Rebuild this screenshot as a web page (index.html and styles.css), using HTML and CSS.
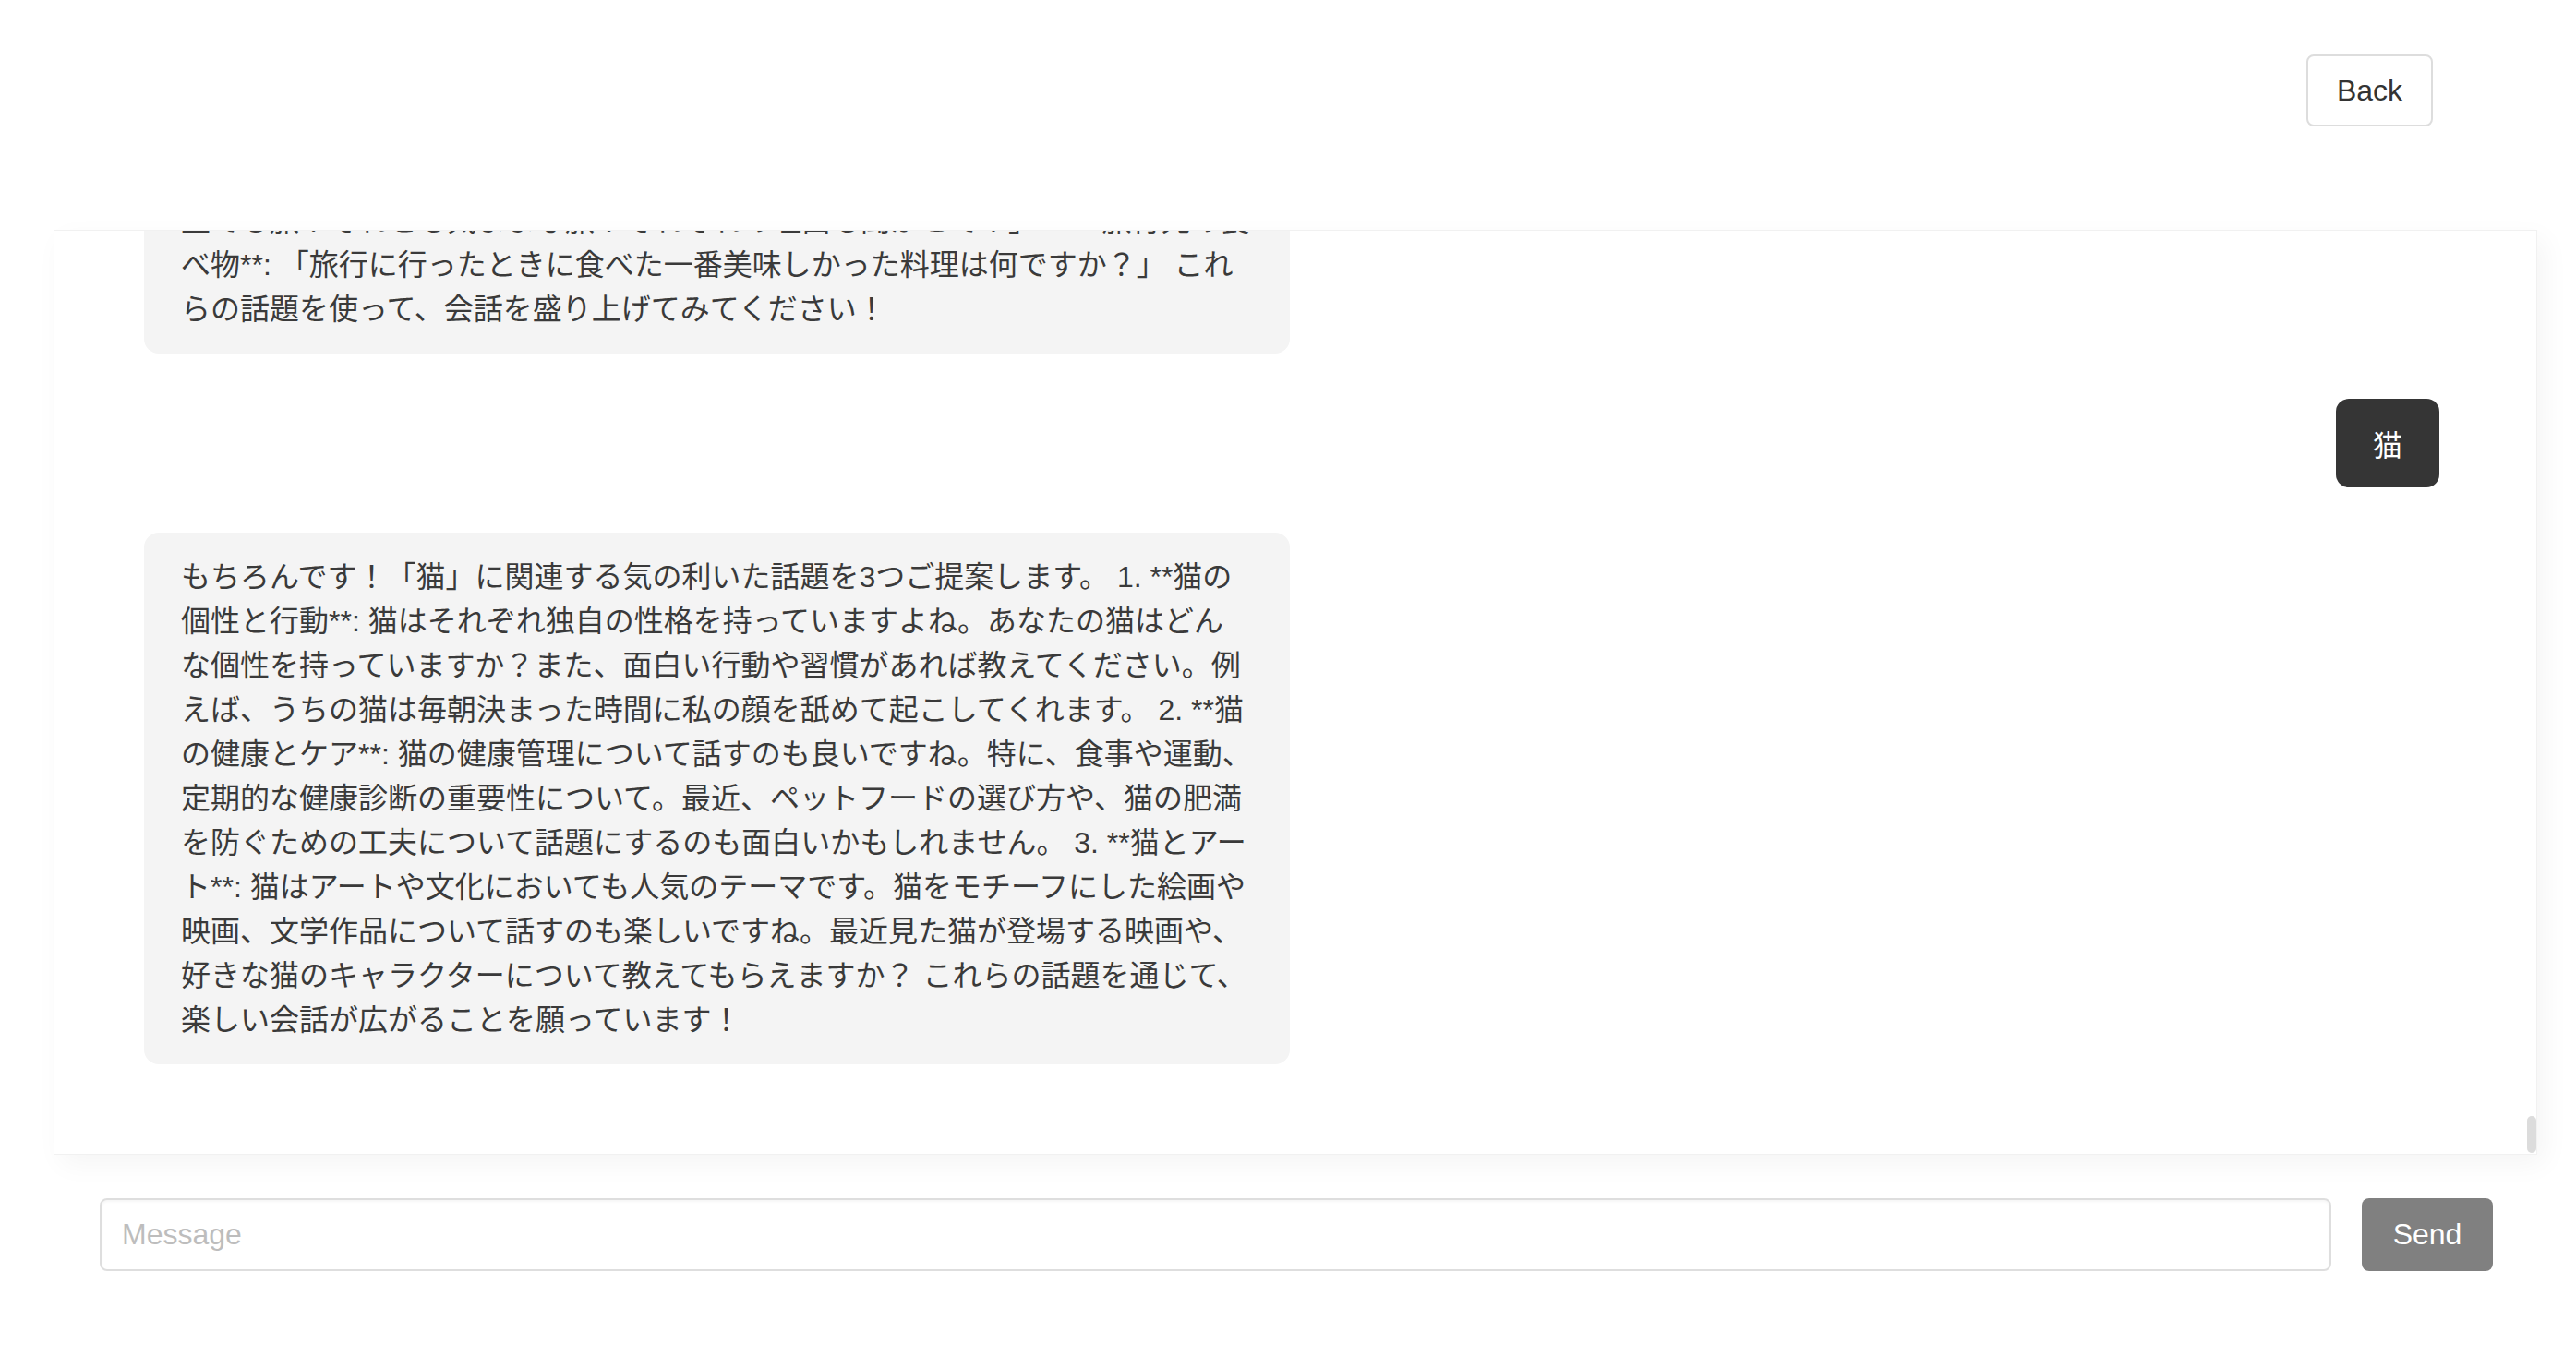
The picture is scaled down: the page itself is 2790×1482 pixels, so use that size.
FILE: index.html
```html
<!DOCTYPE html>
<html lang="ja">
<head>
<meta charset="utf-8">
<title>Chat</title>
<link rel="stylesheet" href="styles.css">
</head>
<body>
<div class="page">
  <header class="topbar">
    <button class="btn-back" type="button">Back</button>
  </header>
  <main class="chat">
    <div class="messages">
      <div class="msg msg-user"><div class="bubble bubble-user">旅行</div></div>
      <div class="msg msg-bot"><div class="bubble bubble-bot">もちろんです！「旅行」に関連する会話が弾む話題をいくつかご提案します。 1. **お気に入りの旅行先**: 「今までに行った中で一番好きな旅行先はどこですか？その理由も教えてください。」 2. **行ってみたい場所**: 「もし時間とお金に制限がなかったら、どこに旅行してみたいですか？」 3. **旅のスタイル**: 「計画を立てる旅？それとも気ままな旅？それぞれの理由も聞かせて！」 4. **旅行先の食べ物**: 「旅行に行ったときに食べた一番美味しかった料理は何ですか？」 これらの話題を使って、会話を盛り上げてみてください！</div></div>
      <div class="msg msg-user"><div class="bubble bubble-user">猫</div></div>
      <div class="msg msg-bot"><div class="bubble bubble-bot">もちろんです！「猫」に関連する気の利いた話題を3つご提案します。 1. **猫の個性と行動**: 猫はそれぞれ独自の性格を持っていますよね。あなたの猫はどんな個性を持っていますか？また、面白い行動や習慣があれば教えてください。例えば、うちの猫は毎朝決まった時間に私の顔を舐めて起こしてくれます。 2. **猫の健康とケア**: 猫の健康管理について話すのも良いですね。特に、食事や運動、定期的な健康診断の重要性について。最近、ペットフードの選び方や、猫の肥満を防ぐための工夫について話題にするのも面白いかもしれません。 3. **猫とアート**: 猫はアートや文化においても人気のテーマです。猫をモチーフにした絵画や映画、文学作品について話すのも楽しいですね。最近見た猫が登場する映画や、好きな猫のキャラクターについて教えてもらえますか？ これらの話題を通じて、楽しい会話が広がることを願っています！</div></div>
    </div>
    <div class="scroll-thumb"></div>
  </main>
  <form class="composer">
    <input class="composer-input" type="text" placeholder="Message">
    <button class="btn-send" type="button">Send</button>
  </form>
</div>
</body>
</html>
```

FILE: styles.css
```css
html, body {
  margin: 0;
  padding: 0;
  background: #ffffff;
}

body {
  font-family: "Liberation Sans", "Noto Sans CJK JP", sans-serif;
  color: #333333;
}

.page {
  width: 2790px;
  height: 1482px;
  overflow: hidden;
}

.topbar {
  height: 249px;
  box-sizing: border-box;
  padding: 59px 155px 0 0;
  display: flex;
  justify-content: flex-end;
  align-items: flex-start;
}

.btn-back {
  width: 137px;
  height: 78px;
  box-sizing: border-box;
  border: 2px solid #dddddd;
  border-radius: 8px;
  background: #ffffff;
  color: #333333;
  font-family: "Liberation Sans", sans-serif;
  font-size: 32px;
  padding: 0;
}

.chat {
  position: relative;
  margin: 0 42px 0 58px;
  height: 1002px;
  box-sizing: border-box;
  border: 1px solid #f1f1f1;
  box-shadow: 8px 10px 28px rgba(0, 0, 0, 0.045);
  background: #ffffff;
  overflow: hidden;
  display: flex;
  flex-direction: column;
  justify-content: flex-end;
}

.messages {
  display: flex;
  flex-direction: column;
  gap: 49px;
  padding: 0 105px 97px 97px;
}

.msg {
  display: flex;
}

.msg-user {
  justify-content: flex-end;
}

.msg-bot {
  justify-content: flex-start;
}

.bubble {
  box-sizing: border-box;
  padding: 24px 40px;
  font-size: 32px;
  line-height: 48px;
  font-family: "Liberation Sans", "Noto Sans CJK JP", sans-serif;
}

.bubble-bot {
  width: 1241px;
  background: #f4f4f4;
  color: #3a3a3a;
  border-radius: 16px;
}

.bubble-user {
  background: #353535;
  color: #ffffff;
  border-radius: 14px;
  font-family: "Noto Sans CJK JP", sans-serif;
  font-weight: 400;
}

.scroll-thumb {
  position: absolute;
  right: 0;
  bottom: 1px;
  width: 10px;
  height: 40px;
  border-radius: 5px;
  background: #dcdcdc;
}

.composer {
  display: flex;
  gap: 33px;
  margin: 47px 0 0;
  padding: 0 90px 0 108px;
}

.composer-input {
  flex: 1;
  height: 79px;
  box-sizing: border-box;
  border: 2px solid #dedede;
  border-radius: 8px;
  padding: 0 22px;
  font-family: "Liberation Sans", sans-serif;
  font-size: 32px;
  color: #333333;
  box-shadow: inset 0 2px 3px rgba(0, 0, 0, 0.04);
  outline: none;
}

.composer-input::placeholder {
  color: #bdbdbd;
}

.btn-send {
  width: 142px;
  height: 79px;
  border: none;
  border-radius: 8px;
  background: #808080;
  color: #ffffff;
  font-family: "Liberation Sans", sans-serif;
  font-size: 32px;
  padding: 0;
}
```
